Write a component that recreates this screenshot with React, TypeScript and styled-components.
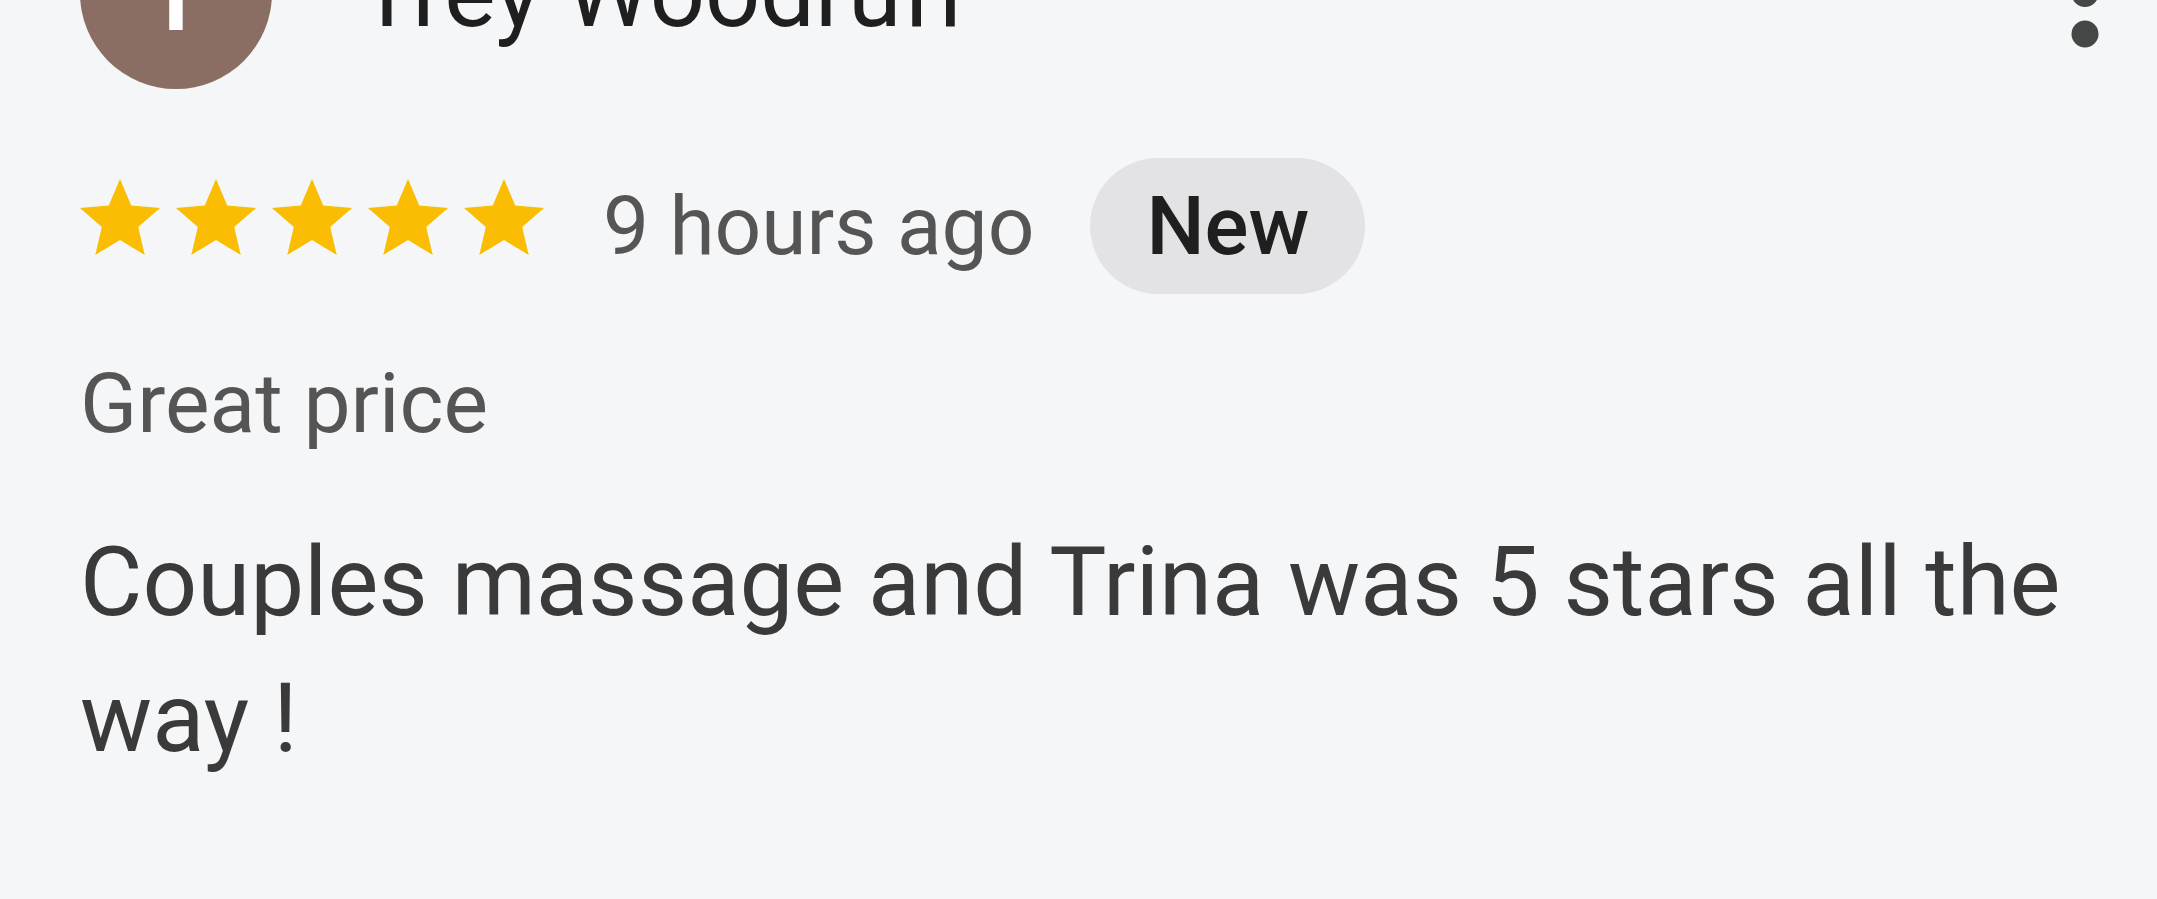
import React from "react";
import styled, { createGlobalStyle } from "styled-components";

const GlobalStyle = createGlobalStyle`
  html, body {
    margin: 0;
    padding: 0;
    background: #f5f6f8;
    overflow: hidden;
  }
  body {
    font-family: Roboto, "Noto Sans", "Liberation Sans", sans-serif;
  }
`;

const Card = styled.div`
  display: flex;
  flex-direction: column;
  margin-top: -103px;
  padding: 0 52px 0 80px;
  background: #f5f6f8;
`;

const Header = styled.div`
  display: flex;
  align-items: center;
`;

const Avatar = styled.div`
  flex: none;
  width: 192px;
  height: 192px;
  border-radius: 50%;
  background: #8b6e63;
  color: #ffffff;
  display: flex;
  align-items: center;
  justify-content: center;
  font-size: 110px;
  font-weight: 500;
  line-height: 1;
`;

const Name = styled.div`
  flex: 1;
  margin-left: 86px;
  font-size: 97px;
  font-weight: 400;
  color: #1f1f1f;
  white-space: nowrap;
`;

const Kebab = styled.svg`
  flex: none;
  width: 40px;
  height: 121px;
  fill: #444746;
`;

const MetaRow = styled.div`
  display: flex;
  align-items: center;
  margin-top: 69px;
`;

const Stars = styled.div`
  display: flex;
  margin-left: -8px;
  margin-bottom: 14px;
`;

const StarIcon = styled.svg`
  width: 96px;
  height: 96px;
  fill: #fbbc04;
  flex: none;
`;

const TimeAgo = styled.span`
  margin-left: 51px;
  font-size: 82px;
  color: #555555;
  white-space: nowrap;
`;

const Badge = styled.span`
  margin-left: 56px;
  height: 136px;
  padding: 0 56px;
  border-radius: 68px;
  background: #e3e3e5;
  color: #1f1f1f;
  font-size: 82px;
  font-weight: 500;
  display: inline-flex;
  align-items: center;
`;

const Title = styled.div`
  margin-top: 62px;
  font-size: 84px;
  line-height: 96px;
  color: #555555;
`;

const Body = styled.p`
  margin: 62px 0 0 0;
  font-size: 96px;
  line-height: 136px;
  color: #3a3a3a;
`;

const Star = () => (
  <StarIcon viewBox="0 0 24 24">
    <path d="M12 17.27L18.18 21l-1.64-7.03L22 9.24l-7.19-.61L12 2 9.19 8.63 2 9.24l5.46 4.73L5.82 21z" />
  </StarIcon>
);

export default function App() {
  return (
    <>
      <GlobalStyle />
      <Card>
        <Header>
          <Avatar>T</Avatar>
          <Name>Trey Woodruff</Name>
          <Kebab viewBox="0 0 40 121">
            <circle cx="20" cy="20" r="13.5" />
            <circle cx="20" cy="60.5" r="13.5" />
            <circle cx="20" cy="101" r="13.5" />
          </Kebab>
        </Header>
        <MetaRow>
          <Stars>
            {[0, 1, 2, 3, 4].map((i) => (
              <Star key={i} />
            ))}
          </Stars>
          <TimeAgo>9 hours ago</TimeAgo>
          <Badge>New</Badge>
        </MetaRow>
        <Title>Great price</Title>
        <Body>Couples massage and Trina was 5 stars all the way !</Body>
      </Card>
    </>
  );
}
